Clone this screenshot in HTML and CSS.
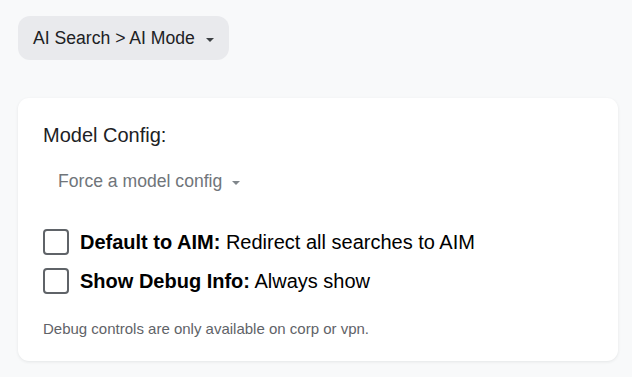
FILE: index.html
```html
<!DOCTYPE html>
<html>
<head>
<meta charset="utf-8">
<link rel="stylesheet" href="styles.css">
</head>
<body>
<div class="page">
  <button class="crumb">
    <span>AI Search &gt; AI Mode</span>
    <span class="caret"></span>
  </button>
  <div class="card">
    <div class="label">Model Config:</div>
    <button class="select">
      <span>Force a model config</span>
      <span class="caret caret-gray"></span>
    </button>
    <div class="options">
      <label class="option">
        <input type="checkbox" class="box">
        <span class="opt-text"><b>Default to AIM:</b> Redirect all searches to AIM</span>
      </label>
      <label class="option">
        <input type="checkbox" class="box">
        <span class="opt-text"><b>Show Debug Info:</b> Always show</span>
      </label>
    </div>
    <div class="note">Debug controls are only available on corp or vpn.</div>
  </div>
</div>
</body>
</html>
```
FILE: styles.css
```css
html, body {
  margin: 0;
  padding: 0;
  background: #f8f9fa;
}
body {
  font-family: "Liberation Sans", Arial, sans-serif;
  color: #202124;
}
.page {
  padding: 16px 14px 16px 18px;
  display: flex;
  flex-direction: column;
  align-items: flex-start;
}
.crumb {
  display: inline-flex;
  align-items: center;
  height: 44px;
  padding: 0 15px 0 15px;
  gap: 11px;
  border: none;
  border-radius: 12px;
  background: #e9eaed;
  font-family: inherit;
  font-size: 17.6px;
  line-height: 20px;
  color: #202124;
}
.caret {
  width: 0;
  height: 0;
  border-left: 4px solid transparent;
  border-right: 4px solid transparent;
  border-top: 4px solid #3c4043;
  margin-top: 3px;
}
.caret-gray {
  border-top-color: #80868b;
}
.card {
  margin-top: 38px;
  width: 600px;
  box-sizing: border-box;
  background: #ffffff;
  border-radius: 11px;
  box-shadow: 0 1px 3px rgba(60, 64, 67, 0.10);
  padding: 25px 25px 23px 25px;
}
.label {
  font-size: 20px;
  line-height: 24px;
  color: #202124;
}
.select {
  display: inline-flex;
  align-items: center;
  gap: 10px;
  margin-top: 15px;
  padding: 8px 15px;
  border: none;
  background: transparent;
  font-family: inherit;
  font-size: 17.6px;
  line-height: 22px;
  color: #70757a;
}
.options {
  margin-top: 29px;
  display: flex;
  flex-direction: column;
  gap: 13px;
}
.option {
  display: flex;
  align-items: center;
  gap: 11px;
}
.box {
  appearance: none;
  -webkit-appearance: none;
  margin: 0;
  width: 26px;
  height: 26px;
  box-sizing: border-box;
  border: 2px solid #5f6368;
  border-radius: 4px;
  background: #fff;
  flex: none;
}
.opt-text {
  font-size: 20px;
  line-height: 26px;
  color: #000;
}
.opt-text b {
  font-weight: 700;
}
.note {
  margin-top: 26px;
  font-size: 15px;
  line-height: 18px;
  color: #5f6368;
}
```
